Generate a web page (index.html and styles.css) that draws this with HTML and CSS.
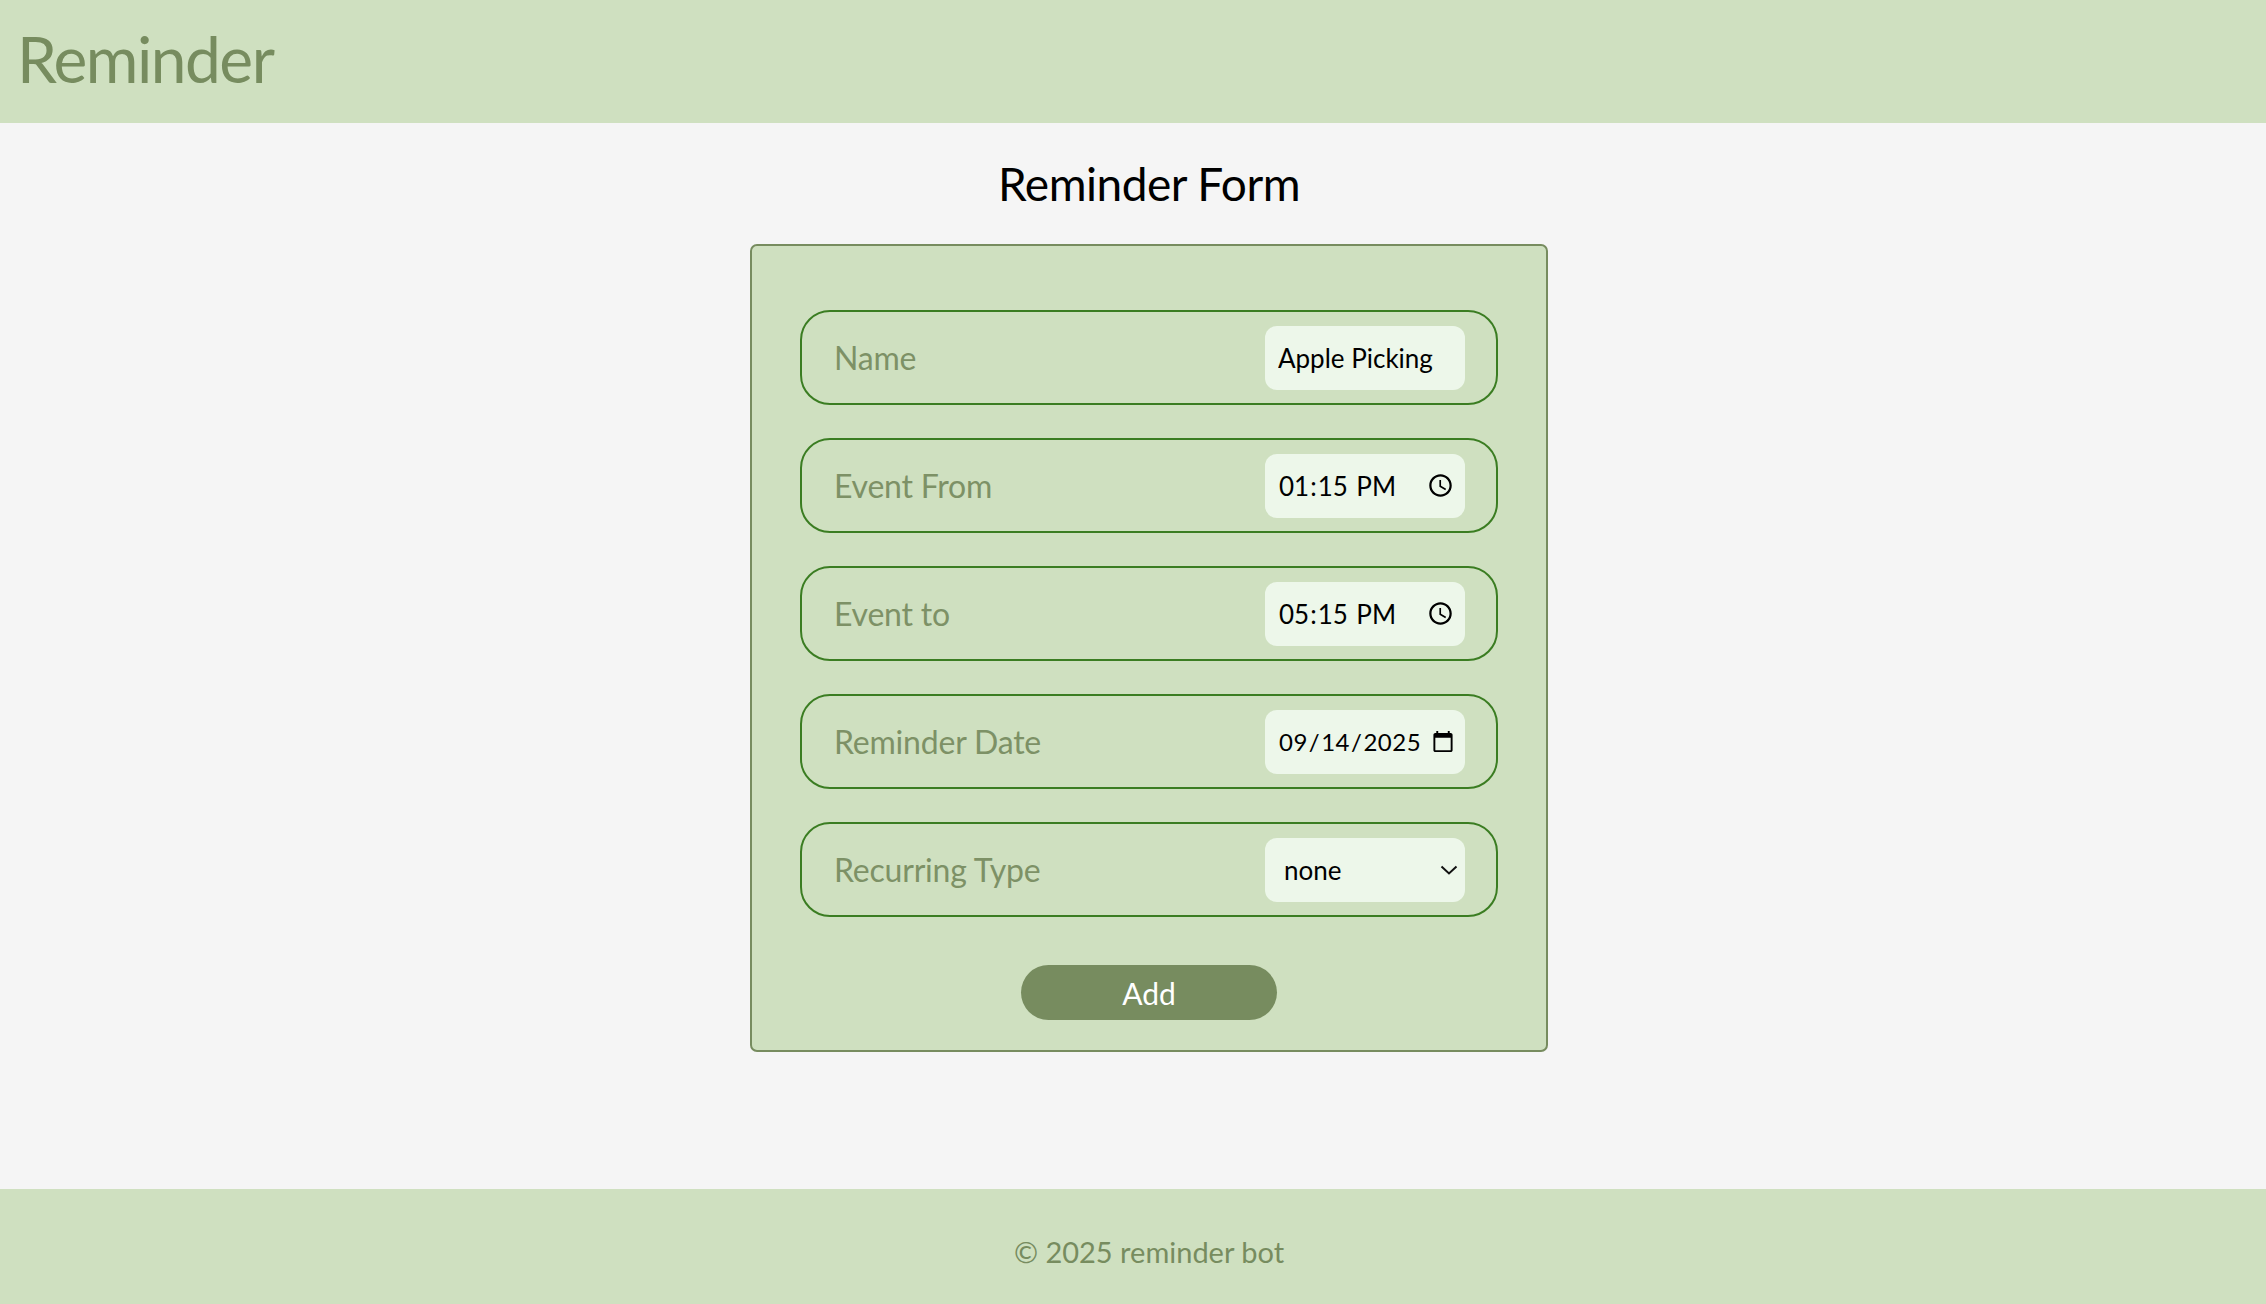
FILE: index.html
```html
<!DOCTYPE html>
<html lang="en">
<head>
<meta charset="utf-8">
<title>Reminder</title>
<link rel="stylesheet" href="styles.css">
</head>
<body>
<div class="page">
  <header class="topbar">
    <h1 class="brand">Reminder</h1>
  </header>
  <main class="main">
    <h2 class="form-title">Reminder Form</h2>
    <form class="card">
      <div class="rows">
        <label class="row">
          <span class="label">Name</span>
          <input class="field" type="text" value="Apple Picking">
        </label>
        <label class="row">
          <span class="label">Event From</span>
          <input class="field" type="time" value="13:15">
        </label>
        <label class="row">
          <span class="label">Event to</span>
          <input class="field" type="time" value="17:15">
        </label>
        <label class="row">
          <span class="label">Reminder Date</span>
          <input class="field date" type="date" value="2025-09-14">
        </label>
        <label class="row">
          <span class="label">Recurring Type</span>
          <span class="select-wrap">
            <select class="field select">
              <option selected>none</option>
              <option>daily</option>
              <option>weekly</option>
              <option>monthly</option>
            </select>
            <svg class="chevron" width="18" height="10" viewBox="0 0 18 10"><path d="M1.5 1.5 L9 8.5 L16.5 1.5" fill="none" stroke="#111" stroke-width="2"/></svg>
          </span>
        </label>
      </div>
      <div class="actions">
        <button class="add-btn" type="button">Add</button>
      </div>
    </form>
  </main>
  <footer class="footer">© 2025 reminder bot</footer>
</div>
</body>
</html>
```
FILE: styles.css
```css
* { box-sizing: border-box; }
html, body { margin: 0; padding: 0; }
body {
  background: #f5f5f5;
  font-family: Lato, "Open Sans", "Liberation Sans", sans-serif;
  color: #000;
}
.page {
  min-height: 100vh;
  display: flex;
  flex-direction: column;
}
.topbar {
  height: 123px;
  background: #cfe0c0;
  display: flex;
  align-items: center;
  padding-left: 17px;
}
.brand {
  margin: 0;
  font-size: 64px;
  font-weight: 400;
  color: #778c5f;
  letter-spacing: -1.5px;
  line-height: 1;
  padding-bottom: 6px;
}
.main {
  flex: 1;
  display: flex;
  flex-direction: column;
  align-items: center;
  padding-left: 32px;
}
.form-title {
  margin: 33px 0 32px;
  font-size: 46px;
  font-weight: 400;
  line-height: 56px;
  letter-spacing: -0.5px;
}
.card {
  width: 798px;
  background: #cfe0c0;
  border: 2px solid #778c5f;
  border-radius: 7px;
  padding: 64px 48px 30px;
}
.rows {
  display: flex;
  flex-direction: column;
  gap: 33px;
}
.row {
  height: 95px;
  border: 2px solid #3b7d22;
  border-radius: 30px;
  display: flex;
  align-items: center;
  justify-content: space-between;
  padding: 0 31px 0 32px;
}
.label {
  font-size: 32px;
  color: #7d9166;
  font-weight: 400;
  letter-spacing: -0.2px;
}
.field {
  width: 200px;
  height: 64px;
  border: none;
  border-radius: 12px;
  background: #edf7ea;
  font-family: Lato, "Open Sans", "Liberation Sans", sans-serif;
  font-size: 26px;
  color: #000;
  padding: 0 8px 0 13px;
  outline: none;
}
.date {
  font-size: 24px;
  letter-spacing: 0.5px;
}
.select-wrap {
  position: relative;
  display: block;
  width: 200px;
  height: 64px;
}
.select {
  -webkit-appearance: none;
  appearance: none;
  padding-left: 19px;
  padding-right: 30px;
  display: block;
}
.chevron {
  position: absolute;
  right: 7px;
  top: 27px;
  pointer-events: none;
}
.actions {
  display: flex;
  justify-content: center;
  margin-top: 48px;
}
.add-btn {
  width: 256px;
  height: 55px;
  border: none;
  border-radius: 28px;
  background: #778c5f;
  color: #fff;
  font-family: Lato, "Open Sans", "Liberation Sans", sans-serif;
  font-size: 30px;
  cursor: pointer;
}
.footer {
  height: 115px;
  background: #cfe0c0;
  color: #778c5f;
  font-size: 29px;
  text-align: center;
  line-height: 36px;
  padding-top: 45px;
  padding-left: 32px;
}
```
